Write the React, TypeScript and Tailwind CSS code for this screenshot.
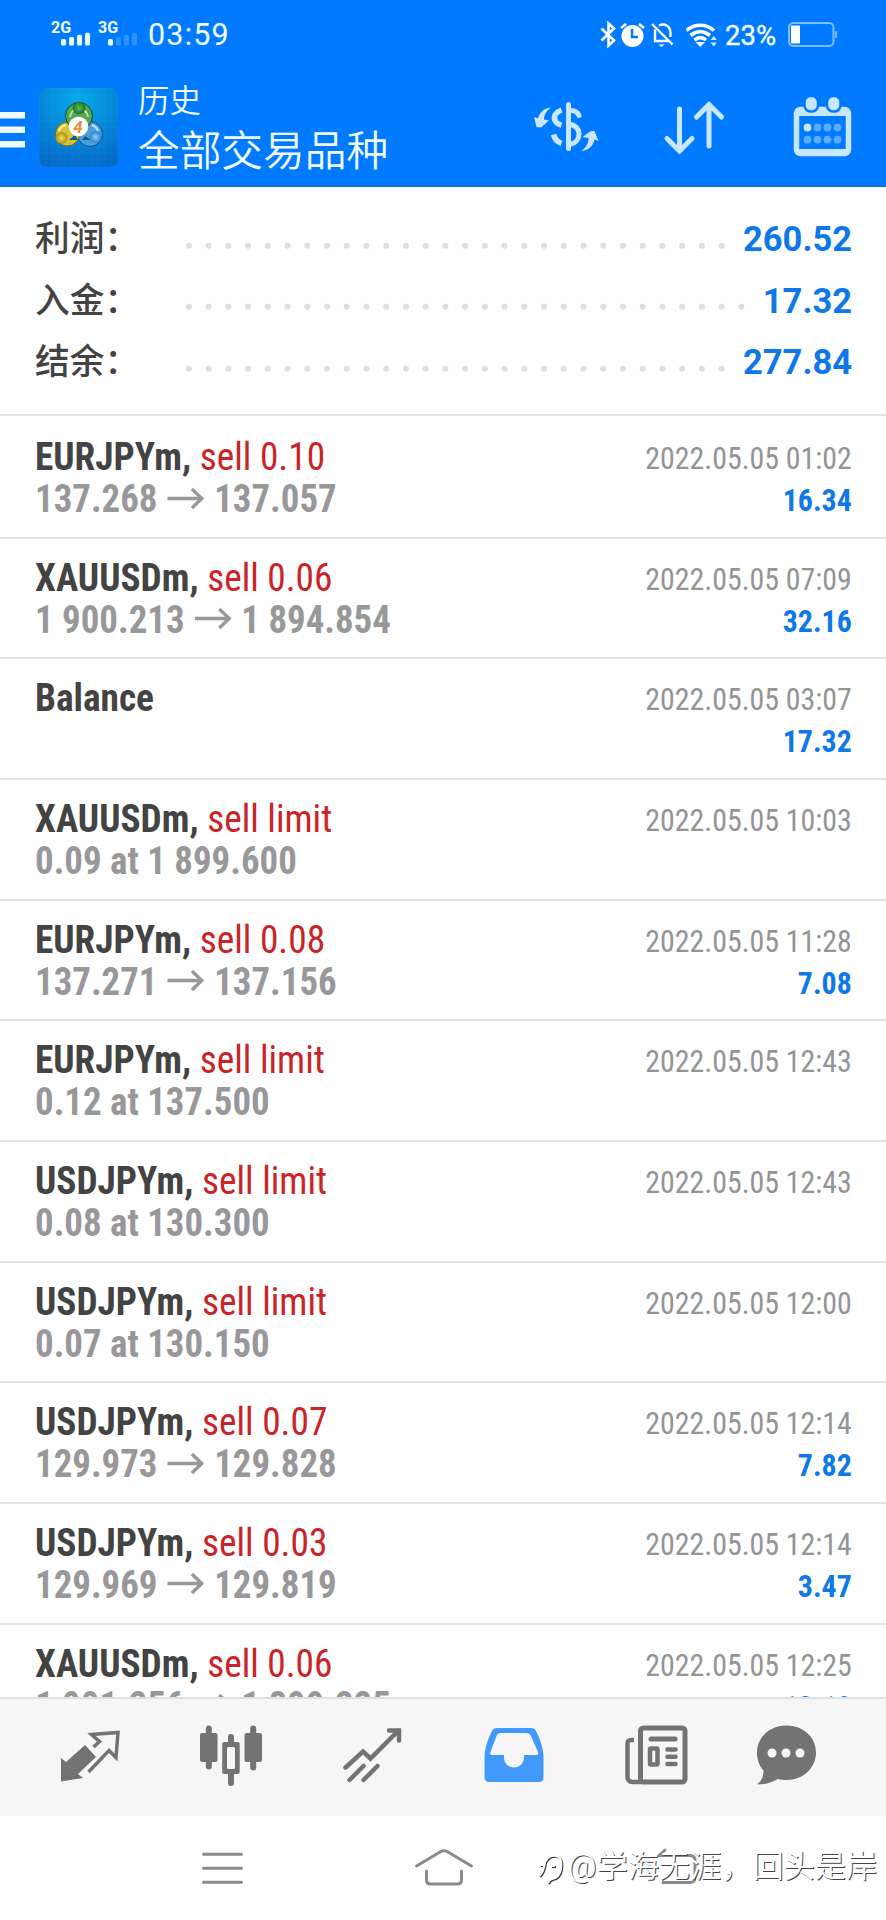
import React from "react";

const CJK = "font-['Roboto','Noto_Sans_CJK_SC',sans-serif]";
const COND = "font-['Roboto_Condensed','Roboto','Noto_Sans_CJK_SC',sans-serif] [font-stretch:75%]";

type Deal = { symbol: string; action?: string; from?: string; to?: string; note?: string; date: string; profit?: string };

const summary = [
  { label: "利润：", value: "260.52", dots: 28 },
  { label: "入金：", value: "17.32", dots: 29 },
  { label: "结余：", value: "277.84", dots: 28 },
];

const deals: Deal[] = [
  { symbol: "EURJPYm,", action: "sell 0.10", from: "137.268", to: "137.057", date: "2022.05.05 01:02", profit: "16.34" },
  { symbol: "XAUUSDm,", action: "sell 0.06", from: "1 900.213", to: "1 894.854", date: "2022.05.05 07:09", profit: "32.16" },
  { symbol: "Balance", date: "2022.05.05 03:07", profit: "17.32" },
  { symbol: "XAUUSDm,", action: "sell limit", note: "0.09 at 1 899.600", date: "2022.05.05 10:03" },
  { symbol: "EURJPYm,", action: "sell 0.08", from: "137.271", to: "137.156", date: "2022.05.05 11:28", profit: "7.08" },
  { symbol: "EURJPYm,", action: "sell limit", note: "0.12 at 137.500", date: "2022.05.05 12:43" },
  { symbol: "USDJPYm,", action: "sell limit", note: "0.08 at 130.300", date: "2022.05.05 12:43" },
  { symbol: "USDJPYm,", action: "sell limit", note: "0.07 at 130.150", date: "2022.05.05 12:00" },
  { symbol: "USDJPYm,", action: "sell 0.07", from: "129.973", to: "129.828", date: "2022.05.05 12:14", profit: "7.82" },
  { symbol: "USDJPYm,", action: "sell 0.03", from: "129.969", to: "129.819", date: "2022.05.05 12:14", profit: "3.47" },
  { symbol: "XAUUSDm,", action: "sell 0.06", from: "1 901.256", to: "1 899.225", date: "2022.05.05 12:25", profit: "12.19" },
];

function Signal({ label, active }: { label: string; active: number }) {
  return (
    <div className="relative h-[28px] w-[39px]">
      <span className="absolute left-0 top-0 text-[16px] font-bold leading-[15px]">{label}</span>
      <svg className="absolute left-[10px] top-[12px]" width="30" height="14" fill="#e6fbff">
        {[0, 1, 2, 3].map((i) => (
          <rect key={i} x={i * 8} y={7 - i * 2.1} width="5" height={6.5 + i * 2.1} rx="1.5" opacity={i < active ? 1 : 0.2} />
        ))}
      </svg>
    </div>
  );
}

function StatusBar() {
  return (
    <div className="flex h-[70px] items-start justify-between pl-[51px] pr-[49px] pt-[20px]">
      <div className="flex items-start">
        <Signal label="2G" active={4} />
        <div className="w-[8px]" />
        <Signal label="3G" active={1} />
        <span className="ml-[11px] text-[30.5px] leading-[30px] tracking-[1.2px] [font-weight:450]">03:59</span>
      </div>
      <div className="flex items-start">
        <svg width="86" height="30" viewBox="600 20 86 30" fill="none" stroke="#fff" strokeWidth="2.2">
          <path d="M601.5 28.500L614 40.500L608.500 45.500V23.500L614 28.500L601.500 40.500" strokeWidth="2.600" />
          <circle cx="632.500" cy="36" r="11" fill="#fff" stroke="none" />
          <path d="M632 29v8h6" stroke="#007aff" strokeWidth="2.500" />
          <path d="M621 28l5-4M644 28l-5-4" strokeWidth="2.500" />
          <path d="M652 24l20.500 20.500M655 29.500v11.500h13M659 25.500c6-3 11.500 1 11.500 7.500v4" strokeWidth="2.400" />
          <path d="M658.500 44.500h6l-3 2.500z" fill="#fff" stroke="none" />
        </svg>
        <svg width="32" height="30" viewBox="684 20 32 30" fill="none" stroke="#fff" strokeWidth="3.6">
          <path d="M684.500 30.500c8-7 19.500-7 27.500 0M688.500 35.500c6-5 13.500-5 19.500 0M692.500 40c4-3 8-3 11.500 0" />
          <path d="M693.500 42h9.500l-4.700 5z" fill="#fff" stroke="none" />
          <path d="M708.500 40l3.200-4 3.200 4zM708.500 42.500l3.200 4 3.200-4z" fill="#cfe8ff" stroke="none" />
        </svg>
        <span className="ml-[7px] w-[63px] text-[27.500px] leading-[31px] [-webkit-text-stroke:0.4px_#f0fcff]">23%</span>
        <svg width="49" height="30" viewBox="788 20 49 30" fill="none">
          <rect x="789" y="23" width="44.500" height="23" rx="4.500" stroke="#7fbcff" strokeWidth="2" />
          <rect x="791" y="25.500" width="9" height="18" rx="1" fill="#fff" />
          <rect x="835" y="31" width="2" height="7" rx="1" fill="#7fbcff" />
        </svg>
      </div>
    </div>
  );
}

function AppLogo() {
  return (
    <svg className="ml-[14px]" width="79" height="79" viewBox="0 0 79 79">
      <defs>
        <radialGradient id="tile" cx="50%" cy="15%" r="90%">
          <stop offset="0" stopColor="#06a9ea" />
          <stop offset="1" stopColor="#0568c8" />
        </radialGradient>
        <pattern id="mesh" width="6.500" height="6.500" patternUnits="userSpaceOnUse">
          <path d="M0 0H6.500M0 0V6.500" stroke="#6fd4ff" strokeWidth="0.600" opacity="0.150" />
        </pattern>
        <radialGradient id="green"><stop offset="0" stopColor="#5fb85a" /><stop offset="1" stopColor="#1a7a2c" /></radialGradient>
        <radialGradient id="gold"><stop offset="0" stopColor="#f0dc60" /><stop offset="1" stopColor="#ab9212" /></radialGradient>
        <radialGradient id="sky"><stop offset="0" stopColor="#8fd0fa" /><stop offset="1" stopColor="#2a82cc" /></radialGradient>
      </defs>
      <rect width="79" height="79" rx="7" fill="url(#tile)" />
      <rect width="79" height="79" rx="7" fill="url(#mesh)" />
      <g strokeWidth="1">
        <circle cx="51" cy="46" r="12.500" fill="#4b9fdd" stroke="#0d4f8d" />
        <circle cx="28.500" cy="46" r="12" fill="#d3c23c" stroke="#6f6610" />
        <circle cx="40" cy="28" r="13.500" fill="#57a653" stroke="#0c4d24" />
        <path d="M40 20a10 10 0 0 1 9 9M40 20a10 10 0 0 0-9 9" stroke="#b5e0a0" strokeWidth="2" fill="none" />
        <path d="M20 43a10 10 0 0 1 7-6" stroke="#f7efa0" strokeWidth="2" fill="none" />
        <path d="M59 43a10 10 0 0 0-6-6" stroke="#b9e2ff" strokeWidth="2" fill="none" />
        <path d="M30 52l9 0-3-5zM43 52l9 0-6-4z" fill="#0a5a90" />
      </g>
      <circle cx="40" cy="20" r="6" fill="url(#green)" stroke="#14632a" strokeWidth="0.600" />
      <circle cx="22.500" cy="50" r="6" fill="url(#gold)" />
      <circle cx="56.500" cy="49" r="6" fill="url(#sky)" />
      <circle cx="39.500" cy="38.500" r="9.800" fill="#fff" />
      <text x="39" y="44.500" textAnchor="middle" fontSize="17" fontWeight="700" fontStyle="italic" fill="#f08a3c" fontFamily="Roboto, sans-serif">4</text>
    </svg>
  );
}

function Header() {
  return (
    <header className={`${CJK} h-[187px] border-b-2 border-[#0f70d8] bg-[#007aff] text-[#f0fcff]`}>
      <StatusBar />
      <div className="flex h-[115px] items-start">
        <svg className="mt-[41px]" width="25" height="38" fill="#eef8ff">
          <rect y="1" width="25" height="6.500" />
          <rect y="15.500" width="25" height="6.500" />
          <rect y="30" width="25" height="6.500" />
        </svg>
        <div className="mt-[18px]"><AppLogo /></div>
        <div className="ml-[20px] mt-[12px] flex flex-1 flex-col [font-weight:350]">
          <span className="text-[31.500px] leading-[40px]">历史</span>
          <span className="mt-[4px] text-[41.700px] leading-[52px]">全部交易品种</span>
        </div>
        <svg className="mt-[20px]" width="352" height="70" viewBox="534 90 352 70" fill="none" stroke="#c9e6ff" strokeLinecap="round">
          <g strokeWidth="5">
            <path d="M568.500 104.500V148.500" />
            <path d="M571 110.500c4 0 6.500 1.500 8 5M571 124.500c5 1.500 8 4.500 8 9.500s-3 9-8 10" />
            <path d="M561.500 110c-5.500 2-9.500 7-5.500 12 1 1.500 3 2.500 5.500 3.200M553.500 134.500c1 4 4 7.500 8 9" strokeLinecap="butt" strokeWidth="5.500" />
          </g>
          <g fill="#c9e6ff" stroke="none">
            <path d="M551 107.500c-5 4-7 7.500-7 12l5 1-8 7-4.500-.5-2.500-10 4 1.500c1.500-6 5.500-10 13-11z" />
            <path d="M581.500 151c5-4 7-7.500 7-13l-6-1 8.500-6h3.500l4 10-4-1.500c-1.500 6.500-5.500 10.500-13 11.500z" />
          </g>
          <path d="M679.500 109V150M667 138.500l12.500 12.500 12.500-12.500M709 146V105M696.500 117l12.500-12.500 12.500 12.500" strokeWidth="5" />
          <rect x="796.500" y="109.500" width="52" height="44" rx="4" strokeWidth="5.500" />
          <path d="M796 112h53" strokeWidth="8" strokeLinecap="butt" />
          <path d="M796 152h53" strokeWidth="6" strokeLinecap="butt" />
          <g fill="#c9e6ff" stroke="#007aff" strokeWidth="2.500">
            <rect x="804.500" y="96" width="13.500" height="15.500" rx="6" />
            <rect x="827" y="96" width="13.500" height="15.500" rx="6" />
          </g>
          <g stroke="none">
            {[127.5, 139.7].map((y) => [807.5, 817.5, 827.5, 837.5].map((x) => (
              <circle key={`${x}-${y}`} cx={x} cy={y} r="3.900" fill={x === 807.5 && y === 127.5 ? "#c9e6ff" : "#5aacff"} />
            )))}
          </g>
        </svg>
      </div>
    </header>
  );
}

function Summary() {
  return (
    <section className="flex h-[227px] flex-col bg-[#fefefe] pl-[35px] pr-[34px] pt-[21px]">
      {summary.map((s) => (
        <div key={s.label} className={`${CJK} flex h-[61.600px] items-start`}>
          <span className="w-[143.800px] shrink-0 whitespace-nowrap text-[34.700px] font-medium leading-[62px] text-[#434343]">{s.label}</span>
          <svg className="mt-[27.500px] flex-1" height="20">
            {Array.from({ length: s.dots }, (_, i) => (
              <circle key={i} cx={9.9 + i * 19.73} cy="9.700" r="3" fill="#dfdfdf" />
            ))}
          </svg>
          <span className="text-[34.500px] font-bold leading-[62px] text-[#0f78e8]">{s.value}</span>
        </div>
      ))}
    </section>
  );
}

function Row({ deal, first }: { deal: Deal; first: boolean }) {
  return (
    <div className={`${COND} flex shrink-0 justify-between border-t-2 border-[#e2e2e2] pl-[34.500px] pr-[34px] ${first ? "h-[122.600px] pt-[20px]" : "h-[120.670px] pt-[18px]"}`}>
      <div className="flex flex-col whitespace-nowrap text-[39px] font-bold leading-[42px]">
        <div className="origin-left scale-x-[0.957] text-[#434343]">
          {deal.symbol} {deal.action && <span className="font-normal text-[#c92427]">{deal.action}</span>}
        </div>
        <div className="flex origin-left scale-x-[0.945] text-[#98989b]">
          {deal.note}
          {deal.from && (
            <>
              <span>{deal.from}</span>
              <svg className="mx-[10.500px] mt-[8.500px]" width="39" height="22" fill="none" stroke="#98989b" strokeWidth="3.500">
                <path d="M0 11.500H37M26 2l10.500 9.500L26 21" />
              </svg>
              <span>{deal.to}</span>
            </>
          )}
        </div>
      </div>
      <div className="flex origin-right scale-x-[0.948] flex-col items-end whitespace-nowrap text-[31.500px] leading-[42px]">
        <span className="mt-[2px] text-[#949497]">{deal.date}</span>
        <span className="font-bold text-[#0f78e8]">{deal.profit}</span>
      </div>
    </div>
  );
}

function TabBar() {
  return (
    <nav className="h-[119.500px] shrink-0 border-t-2 border-[#e0e0e0] bg-[#f6f6f6]">
      <svg width="886" height="117" viewBox="0 1699 886 117" fill="none" stroke="#737373">
        <path d="M61 1758l5 4 19-17 11 12-18 17 5 4-22 3.500z" fill="#737373" stroke="none" />
        <path d="M93.500 1747l6-5.500-8-7 26.500-2-2 25-7-7-20.500 21.500" strokeWidth="3.500" />
        <g fill="#737373" stroke="none">
          <rect x="200" y="1733" width="17.500" height="29" rx="2" />
          <rect x="205.800" y="1725.500" width="6" height="44" rx="3" />
          <rect x="244.500" y="1733" width="17.500" height="29" rx="2" />
          <rect x="250.200" y="1725.500" width="6" height="45" rx="3" />
          <rect x="228" y="1734" width="6" height="52" rx="3" />
          <rect x="222.200" y="1742" width="17.500" height="32" rx="2" />
        </g>
        <rect x="227" y="1747" width="8" height="22" rx="1.500" fill="#f6f6f6" stroke="none" />
        <path d="M345.500 1767.500l17.500-16 7.500 7 28-28M389 1730.500h10v10M349.500 1780l14-14M363.500 1780l14-14" strokeWidth="4.500" strokeLinecap="round" />
        <path d="M497 1728h34c3 0 4 1 5 3 4 8 7.500 17 7.500 27v19c0 3-1.500 5-4.500 5h-50c-3 0-4.500-2-4.500-5v-19c0-10 3.500-19 7.500-27 1-2 2-3 5-3z" fill="#4099fb" stroke="none" />
        <path d="M501 1733h25c3 0 4 1 5 3l7 16c.5 2 0 3-1.500 3h-12.500v2c0 6-4 10.500-10 10.500s-10-4.500-10-10.500v-2h-12c-1.500 0-2-1-1.500-3l6-16c.8-2 2-3 4.500-3z" fill="#f6f6f6" stroke="none" />
        <rect x="640.500" y="1728" width="44.500" height="54" rx="3" strokeWidth="5" />
        <path d="M634 1740h-2.500c-3 0-4 1-4 4v33c0 3 2 5 5 5h10" strokeWidth="4.500" />
        <path d="M651 1739h24" strokeWidth="5" strokeLinecap="round" />
        <rect x="650" y="1748.500" width="7.500" height="16" rx="1" strokeWidth="4.500" />
        <path d="M667.500 1749.500h8M667.500 1756.700h8M667.500 1764h8" strokeWidth="4.500" strokeLinecap="round" />
        <path d="M786.500 1725.500c17 0 29.500 12 29.500 27s-12.500 27.500-29.500 27.500c-3 0-6-.4-8.500-1-7 4-13 5.500-21 5.500 4.500-3.500 6.500-8 6.500-14-4.500-5-6.500-11-6.500-18 0-15 12.500-27 29.500-27z" fill="#737373" stroke="none" />
        <g fill="#f6f6f6" stroke="none">
          <circle cx="772" cy="1753" r="4.500" /><circle cx="786" cy="1753" r="4.500" /><circle cx="800" cy="1753" r="4.500" />
        </g>
      </svg>
    </nav>
  );
}

function SystemNav() {
  return (
    <div className={`${CJK} relative h-[104px] shrink-0 bg-[#fefefe]`}>
      <svg width="886" height="104" viewBox="0 1816 886 104" fill="none" stroke="#8a8a8a" strokeWidth="3" strokeLinecap="round">
        <path d="M203.500 1854.300H241.500M203.500 1868.300H241.500M203.500 1882.300H241.500" />
        <path d="M416.500 1866l23.500-14q4-2.500 8 0l23.500 14M426.500 1871v9q0 4 4 4h27q4 0 4-4v-9" />
        <path d="M663 1882.500h27q5 0 5-5v-17q0-5-5-5h-31l6-5.500" />
      </svg>
      <div className="absolute left-[535px] top-[33px] flex items-start whitespace-nowrap text-white">
        <svg width="33" height="40" viewBox="0 0 33 40" fill="none">
          <path d="M5 28c4-3 5-7 6-13M6 17h4c2-6 6-10 12-9 5 1 6 6 5 13-1 6-4 9-9 10-2 .500-3 2-4 4M17 18h4" stroke="#333" strokeWidth="2" />
          <path d="M4 27c4-3 5-7 6-13M5 16h4c2-6 6-10 12-9 5 1 6 6 5 13-1 6-4 9-9 10-2 .500-3 2-4 4M16 17h4" stroke="#fff" strokeWidth="2" />
        </svg>
        <span className="text-[31.200px] leading-[35px] [font-weight:350] [text-shadow:1px_1px_0_#444]">@学海无涯，回头是岸</span>
      </div>
    </div>
  );
}

export default function App() {
  return (
    <div className="flex h-[1920px] w-[886px] flex-col overflow-hidden bg-[#fefefe]">
      <Header />
      <Summary />
      <main className="flex h-[1282.500px] shrink-0 flex-col overflow-hidden">
        {deals.map((d, i) => <Row key={i} deal={d} first={i === 0} />)}
      </main>
      <TabBar />
      <SystemNav />
    </div>
  );
}
